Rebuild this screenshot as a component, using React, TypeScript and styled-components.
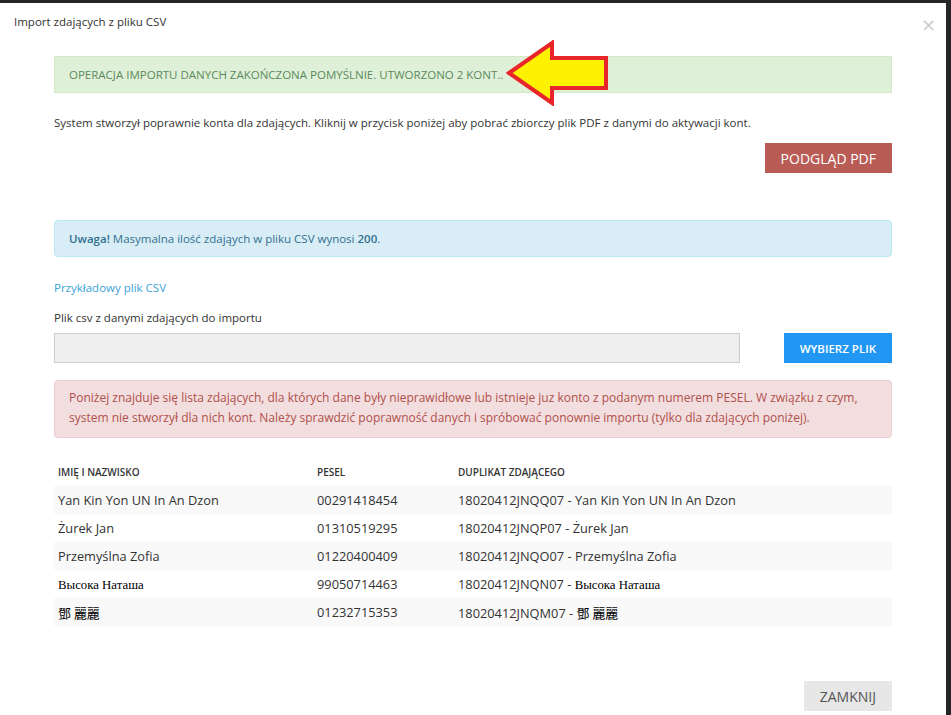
import styled, { createGlobalStyle } from "styled-components";

interface IDuplicate {
  name: string;
  pesel: string;
  code: string;
  fallback?: boolean;
}

const rows: IDuplicate[] = [
  { name: "Yan Kin Yon UN In An Dzon", pesel: "00291418454", code: "18020412JNQQ07" },
  { name: "Żurek Jan", pesel: "01310519295", code: "18020412JNQP07" },
  { name: "Przemyślna Zofia", pesel: "01220400409", code: "18020412JNQO07" },
  { name: "Высока Наташа", pesel: "99050714463", code: "18020412JNQN07", fallback: true },
  { name: "鄧 麗麗", pesel: "01232715353", code: "18020412JNQM07", fallback: true },
];

function App() {
  return (
    <>
      <GlobalStyle />
      <Modal>
        <Header>
          <Title>Import zdających z pliku CSV</Title>
          <Close>×</Close>
        </Header>
        <Body>
          <SuccessWrap>
            <Alert $kind="success">
              OPERACJA IMPORTU DANYCH ZAKOŃCZONA POMYŚLNIE. UTWORZONO 2 KONT..
            </Alert>
            <Arrow width="104" height="66" viewBox="0 0 104 66">
              <polygon
                points="3,33 46,3 46,18 100,18 100,48 46,48 46,63"
                fill="#fff200"
                stroke="#e8262a"
                strokeWidth="4"
                strokeLinejoin="miter"
              />
            </Arrow>
          </SuccessWrap>
          <Text>
            System stworzył poprawnie konta dla zdających. Kliknij w przycisk poniżej aby pobrać
            zbiorczy plik PDF z danymi do aktywacji kont.
          </Text>
          <ButtonRow>
            <Button $variant="danger">PODGLĄD PDF</Button>
          </ButtonRow>
          <Alert $kind="info" $mt={47}>
            <b>Uwaga!</b> Masymalna ilość zdająych w pliku CSV wynosi <b>200</b>.
          </Alert>
          <Link href="#">Przykładowy plik CSV</Link>
          <Label>Plik csv z danymi zdających do importu</Label>
          <FileRow>
            <FileInput />
            <Button $variant="primary" $small>
              WYBIERZ PLIK
            </Button>
          </FileRow>
          <Alert $kind="danger" $mt={17} $lines>
            Poniżej znajduje się lista zdających, dla których dane były nieprawidłowe lub istnieje
            juz konto z podanym numerem PESEL. W związku z czym, system nie stworzył dla nich kont.
            Należy sprawdzić poprawność danych i spróbować ponownie importu (tylko dla zdających
            poniżej).
          </Alert>
          <Table>
            <colgroup>
              <col style={{ width: "259px" }} />
              <col style={{ width: "141px" }} />
              <col />
            </colgroup>
            <thead>
              <tr>
                <Th>IMIĘ I NAZWISKO</Th>
                <Th>PESEL</Th>
                <Th>DUPLIKAT ZDAJĄCEGO</Th>
              </tr>
            </thead>
            <tbody>
              {rows.map((row) => (
                <Row key={row.pesel}>
                  <Td>{row.fallback ? <Fallback>{row.name}</Fallback> : row.name}</Td>
                  <Td>{row.pesel}</Td>
                  <Td>
                    {row.code} - {row.fallback ? <Fallback>{row.name}</Fallback> : row.name}
                  </Td>
                </Row>
              ))}
            </tbody>
          </Table>
        </Body>
        <Footer>
          <Button $variant="default">ZAMKNIJ</Button>
        </Footer>
      </Modal>
    </>
  );
}

const GlobalStyle = createGlobalStyle`
  html, body {
    margin: 0;
    padding: 0;
    background: #262626;
    height: 715px;
    overflow: hidden;
  }
  body {
    font-family: "Open Sans", "Noto Sans", sans-serif;
    color: #333;
  }
`;

const Modal = styled.div`
  width: 946px;
  height: 760px;
  margin-top: 3px;
  background: #fff;
  display: flex;
  flex-direction: column;
`;

const Header = styled.div`
  display: flex;
  align-items: center;
  justify-content: space-between;
  height: 36px;
  padding: 0 14px;
`;

const Title = styled.h4`
  margin: 0;
  font-size: 11.5px;
  font-weight: 400;
  color: #333;
`;

const Close = styled.span`
  font-family: "DejaVu Sans", sans-serif;
  font-size: 18px;
  color: #ccc;
  margin-top: 6px;
  margin-right: -4px;
`;

const Body = styled.div`
  padding: 17px 54px 0;
  display: flex;
  flex-direction: column;
`;

const SuccessWrap = styled.div`
  position: relative;
`;

const Alert = styled.div<{ $kind: "success" | "info" | "danger"; $mt?: number; $lines?: boolean }>`
  margin-top: ${(p) => p.$mt ?? 0}px;
  padding: ${(p) => (p.$lines ? "7px 14px 9px" : "10px 14px")};
  font-size: ${(p) => (p.$lines ? "12px" : "11.5px")};
  line-height: ${(p) => (p.$lines ? "20px" : "15px")};
  border: 1px solid transparent;
  border-radius: ${(p) => (p.$kind === "success" ? "0" : "4px")};
  background: ${(p) =>
    p.$kind === "success" ? "#dff0d8" : p.$kind === "info" ? "#d9edf7" : "#f2dede"};
  border-color: ${(p) =>
    p.$kind === "success" ? "#d6e9c6" : p.$kind === "info" ? "#bce8f1" : "#ebccd1"};
  color: ${(p) =>
    p.$kind === "success" ? "#5c8a5c" : p.$kind === "info" ? "#31708f" : "#b0504c"};
  b {
    font-weight: 600;
  }
`;

const Arrow = styled.svg`
  position: absolute;
  left: 452px;
  top: -16px;
`;

const Text = styled.p`
  margin: 21px 0 0;
  font-size: 11.5px;
  line-height: 18px;
  color: #333;
`;

const ButtonRow = styled.div`
  display: flex;
  justify-content: flex-end;
  margin-top: 11px;
`;

const Button = styled.button<{ $variant: "danger" | "primary" | "default"; $small?: boolean }>`
  border: none;
  border-radius: 0;
  height: 30px;
  padding: 0 16px;
  font-family: "Open Sans", "Noto Sans", sans-serif;
  font-size: ${(p) => (p.$small ? "11.5px" : "14px")};
  font-weight: ${(p) => (p.$small ? 600 : 400)};
  background: ${(p) =>
    p.$variant === "danger" ? "#b95c55" : p.$variant === "primary" ? "#2196f3" : "#e7e7e7"};
  color: ${(p) => (p.$variant === "default" ? "#555" : "#fff")};
`;

const Link = styled.a`
  margin-top: 22px;
  font-size: 11.5px;
  line-height: 18px;
  color: #3ba3db;
  text-decoration: none;
  align-self: flex-start;
`;

const Label = styled.label`
  margin-top: 12px;
  font-size: 11.5px;
  line-height: 18px;
  color: #333;
`;

const FileRow = styled.div`
  display: flex;
  justify-content: space-between;
  margin-top: 6px;
`;

const FileInput = styled.div`
  width: 684px;
  height: 28px;
  background: #eee;
  border: 1px solid #ccc;
`;

const Table = styled.table`
  margin-top: 27px;
  width: 100%;
  border-collapse: collapse;
  table-layout: fixed;
`;

const Th = styled.th`
  text-align: left;
  font-size: 10px;
  font-weight: 600;
  color: #333;
  padding: 0 4px 7px;
  line-height: 14px;
`;

const Row = styled.tr`
  &:nth-child(odd) {
    background: #f9f9f9;
  }
`;

const Td = styled.td`
  height: 28px;
  padding: 0 4px;
  font-size: 12.8px;
  color: #333;
  white-space: nowrap;
`;

const Fallback = styled.span`
  font-family: "Liberation Serif", "Noto Sans CJK SC", serif;
  color: #000;
`;

const Footer = styled.div`
  display: flex;
  justify-content: flex-end;
  padding: 0 54px;
  margin-top: 55px;
`;

export default App;
